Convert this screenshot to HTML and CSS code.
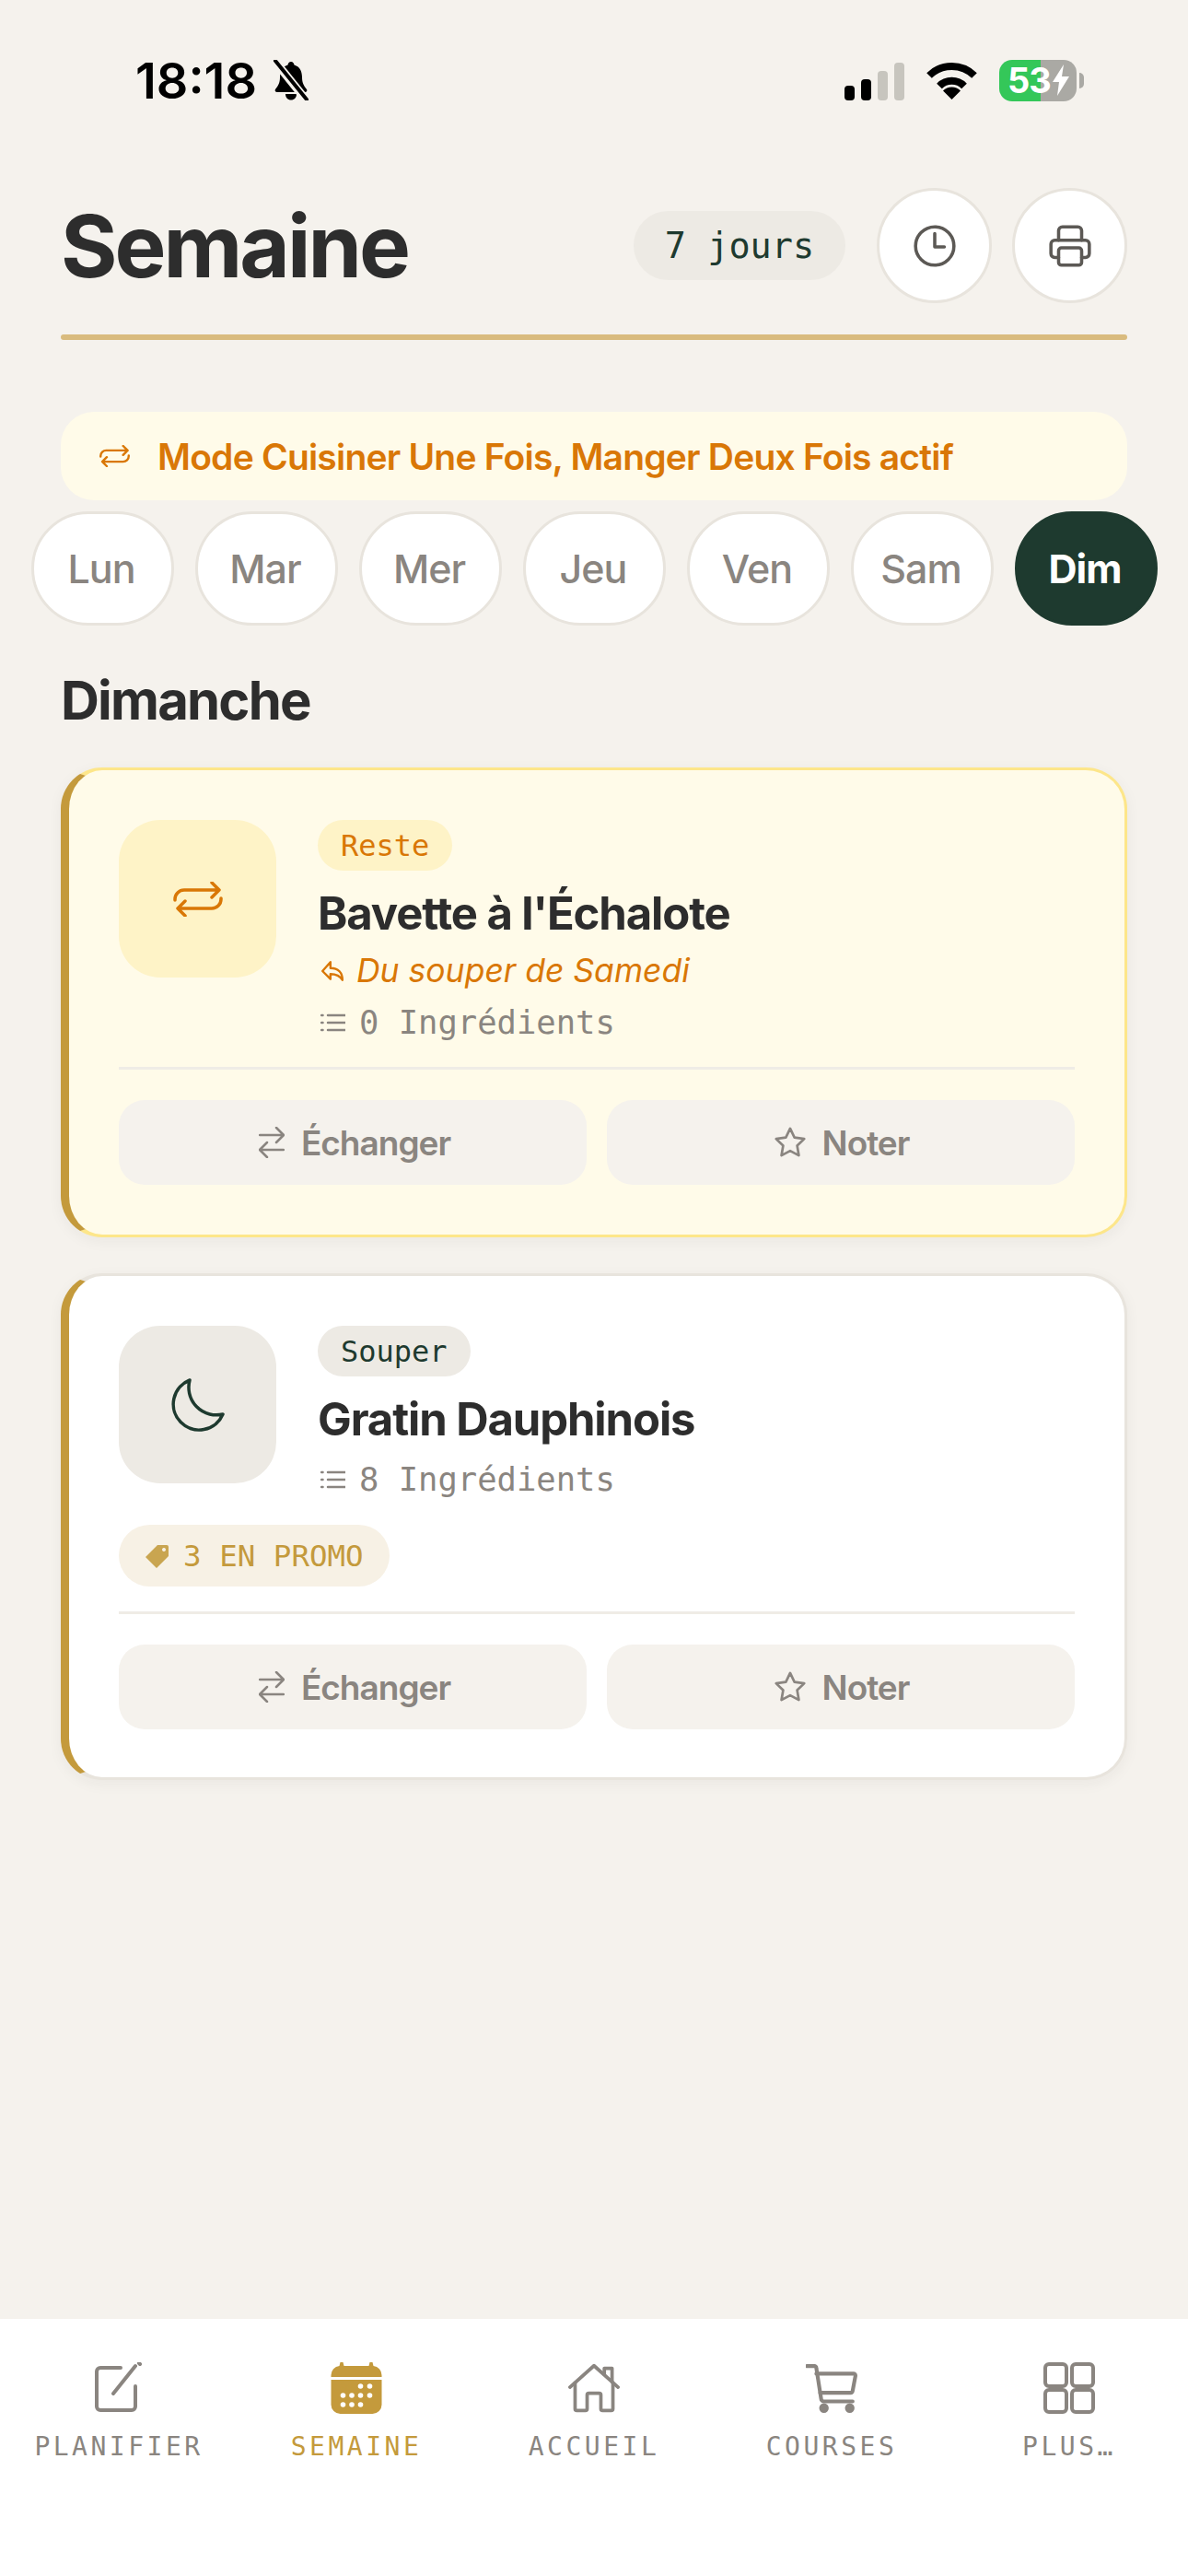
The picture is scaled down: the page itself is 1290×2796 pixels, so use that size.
FILE: index.html
```html
<!DOCTYPE html>
<html lang="fr">
<head>
  <meta charset="UTF-8" />
  <meta name="viewport" content="width=device-width, initial-scale=1.0"/>
  <title>Semaine</title>
  <link rel="stylesheet" href="styles.css">
</head>
<body>
  <div class="page">
    <div class="status">
      <div class="status-left">
        <span class="time">18:18</span>
        <svg class="bell" viewBox="0 0 42 44"><path d="M21 2c2 0 3 1.500 3.500 3.500C31 7.500 33 13 33 19c0 6 2 9 5 13 1 1.500 0 3-2 3H6c-2 0-3-1.500-2-3 3-4 5-7 5-13 0-6 2-11.500 8.500-13.500C18 3.500 19 2 21 2Z"/><path d="M15 37h12c0 4-2.500 6.500-6 6.500S15 41 15 37Z"/><path d="M4 2l33 41" stroke="#f5f2ed" stroke-width="9"/><path d="M4 1l34 42" stroke="#000" stroke-width="4" stroke-linecap="round"/></svg>
      </div>
      <div class="status-right">
        <div class="signal">
          <i class="bar b1"></i><i class="bar b2"></i><i class="bar b3 off"></i><i class="bar b4 off"></i>
        </div>
        <svg class="wifi" viewBox="0 0 57 42" fill="none" stroke="#000" stroke-width="8"><path d="M4 16A35 35 0 0 1 53 16"/><path d="M15 27.500A19 19 0 0 1 42 27.500"/><path d="M28.500 42L19 32.500A13.500 13.500 0 0 1 38 32.500Z" fill="#000" stroke="none"/></svg>
        <div class="battery-wrap">
          <div class="battery">
            <span>53</span>
            <svg class="bolt" viewBox="0 0 20 34"><path d="M13 0L1 19h7L6 34 19 13h-8Z" fill="#fff"/></svg>
          </div>
          <div class="battery-tip"></div>
        </div>
      </div>
    </div>

    <header class="page-head">
      <h1>Semaine</h1>
      <div class="head-tools">
        <span class="days-pill">7 jours</span>
        <button class="round-btn">
          <svg viewBox="0 0 24 24"><circle cx="12" cy="12" r="10"/><path d="M12 5.500V12.500h5"/></svg>
        </button>
        <button class="round-btn">
          <svg viewBox="0 0 24 24"><path d="M6 18H4a2 2 0 0 1-2-2v-5a2 2 0 0 1 2-2h16a2 2 0 0 1 2 2v5a2 2 0 0 1-2 2h-2"/><path d="M6 9V4a2 2 0 0 1 2-2h8a2 2 0 0 1 2 2v5"/><rect x="6" y="13" width="12" height="9" rx="1.500"/></svg>
        </button>
      </div>
    </header>
    <div class="head-rule"></div>

    <div class="banner">
      <svg class="banner-icon" viewBox="0 0 54 38"><path d="M2 20v-1a10 10 0 0 1 10-10h38M42 1l8 8-8 8"/><path d="M52 18v1a10 10 0 0 1-10 10H5M13 21l-8 8 8 8"/></svg>
      <span>Mode Cuisiner Une Fois, Manger Deux Fois actif</span>
    </div>

    <div class="day-tabs">
      <div class="day">Lun</div>
      <div class="day">Mar</div>
      <div class="day">Mer</div>
      <div class="day">Jeu</div>
      <div class="day">Ven</div>
      <div class="day">Sam</div>
      <div class="day active">Dim</div>
    </div>

    <h2 class="day-title">Dimanche</h2>

    <section class="card leftover">
      <div class="card-top">
        <div class="meal-icon">
          <svg viewBox="0 0 54 38"><path d="M2 20v-1a10 10 0 0 1 10-10h38M42 1l8 8-8 8"/><path d="M52 18v1a10 10 0 0 1-10 10H5M13 21l-8 8 8 8"/></svg>
        </div>
        <div class="meal-info">
          <span class="tag">Reste</span>
          <div class="meal-name">Bavette à l'Échalote</div>
          <div class="meal-from">
            <svg viewBox="0 0 24 24"><path d="M10 3L2 12l8 8v-5c5 0 9 1 12 6 0-7-4-12-12-12Z"/></svg>
            <span>Du souper de Samedi</span>
          </div>
          <div class="meal-count">
            <svg viewBox="0 0 27 20"><path d="M8 2h19M8 10h19M8 18h19"/><path d="M1 2h1.500M1 10h1.500M1 18h1.500"/></svg>
            <span>0 Ingrédients</span>
          </div>
        </div>
      </div>
      <div class="card-line"></div>
      <div class="card-actions">
        <button class="act">
          <svg class="swap" viewBox="0 0 28 34"><path d="M1 9h26M19 1l8 8-8 8M27 25H1M9 17l-8 8 8 8"/></svg>
          Échanger
        </button>
        <button class="act">
          <svg viewBox="0 0 24 24"><path d="M12 2.500l2.950 6.100 6.700.95-4.850 4.700 1.150 6.650L12 17.750 6.050 20.900l1.150-6.650-4.850-4.700 6.700-.95Z"/></svg>
          Noter
        </button>
      </div>
    </section>

    <section class="card">
      <div class="card-top">
        <div class="meal-icon">
          <svg viewBox="0 0 58 58"><path d="M20 2A28 28 0 1 0 56 39A30 30 0 0 1 20 2Z"/></svg>
        </div>
        <div class="meal-info">
          <span class="tag">Souper</span>
          <div class="meal-name">Gratin Dauphinois</div>
          <div class="meal-count">
            <svg viewBox="0 0 27 20"><path d="M8 2h19M8 10h19M8 18h19"/><path d="M1 2h1.500M1 10h1.500M1 18h1.500"/></svg>
            <span>8 Ingrédients</span>
          </div>
        </div>
      </div>
      <div class="promo">
        <svg viewBox="0 0 28 28"><path d="M14 2h10a2 2 0 0 1 2 2v10L13 27 1 15ZM21 5a2 2 0 1 0 .01 0Z" fill-rule="evenodd"/></svg>
        3 EN PROMO
      </div>
      <div class="card-line"></div>
      <div class="card-actions">
        <button class="act">
          <svg class="swap" viewBox="0 0 28 34"><path d="M1 9h26M19 1l8 8-8 8M27 25H1M9 17l-8 8 8 8"/></svg>
          Échanger
        </button>
        <button class="act">
          <svg viewBox="0 0 24 24"><path d="M12 2.500l2.950 6.100 6.700.95-4.850 4.700 1.150 6.650L12 17.750 6.050 20.900l1.150-6.650-4.850-4.700 6.700-.95Z"/></svg>
          Noter
        </button>
      </div>
    </section>

    <nav class="tabbar">
      <div class="tab">
        <svg viewBox="0 0 56 56"><path d="M30 6H8a4 4 0 0 0-4 4v38a4 4 0 0 0 4 4h34a4 4 0 0 0 4-4V26"/><path d="M22 34L46 4M50 1l1 1"/></svg>
        <span>PLANIFIER</span>
      </div>
      <div class="tab active">
        <svg viewBox="0 0 55 56"><path d="M10 0h3l1 4h27l1-4h3l1 4a10 10 0 0 1 9 10v2H0v-2A10 10 0 0 1 9 4ZM0 19h55v27a10 10 0 0 1-10 10H10A10 10 0 0 1 0 46Z" fill="#c49a3c" stroke="none"/><g fill="#fff" stroke="none"><circle cx="32" cy="26" r="2.800"/><circle cx="42" cy="26" r="2.800"/><circle cx="13" cy="36" r="2.800"/><circle cx="22.500" cy="36" r="2.800"/><circle cx="32" cy="36" r="2.800"/><circle cx="42" cy="36" r="2.800"/><circle cx="13" cy="46" r="2.800"/><circle cx="22.500" cy="46" r="2.800"/><circle cx="32" cy="46" r="2.800"/></g></svg>
        <span>SEMAINE</span>
      </div>
      <div class="tab">
        <svg viewBox="0 0 60 56"><path d="M2 27L30 2l28 25"/><path d="M8 22v30a2 2 0 0 0 2 2h10a2 2 0 0 0 2-2V36a2 2 0 0 1 2-2h12a2 2 0 0 1 2 2v16a2 2 0 0 0 2 2h10a2 2 0 0 0 2-2V22"/><path d="M42 12V5h9v16"/></svg>
        <span>ACCUEIL</span>
      </div>
      <div class="tab">
        <svg viewBox="0 0 54 50"><path d="M1 2h8a2 2 0 0 1 2 2l5 32a3 3 0 0 0 3 3h30"/><path d="M11 10h39a2 2 0 0 1 2 2l-3 16a2 2 0 0 1-2 2H15"/><circle cx="19" cy="46" r="3" fill="#8a8580"/><circle cx="46" cy="46" r="3" fill="#8a8580"/></svg>
        <span>COURSES</span>
      </div>
      <div class="tab">
        <svg viewBox="0 0 56 56"><rect x="2" y="2" width="23" height="24" rx="4"/><rect x="31" y="2" width="23" height="24" rx="4"/><rect x="2" y="30" width="23" height="24" rx="4"/><rect x="31" y="30" width="23" height="24" rx="4"/></svg>
        <span>PLUS…</span>
      </div>
    </nav>
  </div>
</body>
</html>
```

FILE: styles.css
```css
:root {
  --bg: #f5f2ed;
  --text: #2d2d2d;
  --green: #1e3a2f;
  --gold: #c49a3c;
  --orange: #d97706;
  --muted: #8a8580;
  --line: #e8e4dd;
  --soft: #edeae4;
  --mono: "DejaVu Sans Mono", "Liberation Mono", monospace;
}

* {
  box-sizing: border-box;
}

body {
  margin: 0;
  background: var(--bg);
  color: var(--text);
  font-family: Inter, "Liberation Sans", sans-serif;
}

.page {
  display: flex;
  flex-direction: column;
  height: 2796px;
  overflow: hidden;
}

/* status bar */
.status {
  display: flex;
  justify-content: space-between;
  align-items: center;
  height: 46px;
  margin-top: 64px;
  padding: 0 113px 0 147px;
}

.status-left, .status-right {
  display: flex;
  align-items: center;
}

.time {
  font-size: 54px;
  font-weight: 600;
  color: #000;
}

.bell {
  width: 42px;
  height: 44px;
  margin-left: 16px;
}

.signal {
  display: flex;
  align-items: flex-end;
  gap: 7px;
  height: 41px;
  margin-top: 2px;
}

.bar {
  width: 11px;
  background: #000;
  border-radius: 4px;
}
.bar.off { background: #c7c5be; }
.b1 { height: 16px; }
.b2 { height: 23px; }
.b3 { height: 32px; }
.b4 { height: 41px; }

.wifi {
  width: 57px;
  height: 42px;
  margin-left: 23px;
}

.battery-wrap {
  display: flex;
  align-items: center;
  margin-left: 23px;
}

.battery {
  display: flex;
  align-items: center;
  gap: 1px;
  width: 84px;
  height: 45px;
  padding-left: 9px;
  border-radius: 14px;
  background: linear-gradient(90deg, #34c759 54%, #aaa9a4 54%);
  color: #fff;
  font-size: 38px;
  font-weight: 700;
  letter-spacing: -1px;
}

.bolt {
  width: 20px;
  height: 34px;
}

.battery-tip {
  width: 5px;
  height: 17px;
  margin-left: 3px;
  background: #aaa9a4;
  border-radius: 0 5px 5px 0;
}

/* title */
.page-head {
  display: flex;
  justify-content: space-between;
  align-items: center;
  height: 125px;
  margin-top: 94px;
  padding: 0 66px;
}

h1 {
  margin: 0;
  font-size: 94px;
  font-weight: 700;
  letter-spacing: -3px;
}

.head-tools {
  display: flex;
  align-items: center;
}

.days-pill {
  height: 75px;
  width: 230px;
  margin-right: 34px;
  border-radius: 38px;
  background: var(--soft);
  color: var(--green);
  font-family: var(--mono);
  font-size: 38.500px;
  line-height: 75px;
  text-align: center;
}

.round-btn {
  display: flex;
  align-items: center;
  justify-content: center;
  width: 125px;
  height: 125px;
  margin-left: 22px;
  padding: 0;
  background: #fff;
  border: 3px solid var(--line);
  border-radius: 50%;
}
.days-pill + .round-btn { margin-left: 0; }

.round-btn svg {
  width: 50px;
  height: 50px;
  fill: none;
  stroke: #5c5955;
  stroke-width: 1.700;
  stroke-linecap: round;
  stroke-linejoin: round;
}

.head-rule {
  height: 6px;
  margin: 34px 66px 0;
  background: #d9bb7e;
  border-radius: 3px;
}

/* banner */
.banner {
  display: flex;
  align-items: center;
  height: 96px;
  margin: 78px 66px 0;
  padding-left: 42px;
  background: #fffbe9;
  border-radius: 36px;
  color: var(--orange);
  font-size: 39px;
  font-weight: 600;
  letter-spacing: -0.800px;
}

.banner-icon {
  width: 33px;
  height: 24px;
  margin-right: 30px;
  fill: none;
  stroke: var(--orange);
  stroke-width: 4;
  stroke-linecap: round;
  stroke-linejoin: round;
}

/* days */
.day-tabs {
  display: flex;
  gap: 23px;
  margin-top: 12px;
  padding-left: 34px;
}

.day {
  display: flex;
  align-items: center;
  justify-content: center;
  width: 155px;
  height: 124px;
  padding-right: 3px;
  background: #fff;
  border: 3px solid var(--line);
  border-radius: 62px;
  color: var(--muted);
  font-size: 43px;
  font-weight: 450;
  letter-spacing: -1px;
}

.day.active {
  background: var(--green);
  border-color: var(--green);
  color: #fff;
  font-weight: 700;
}

.day-title {
  height: 68px;
  margin: 47px 66px 39px;
  font-size: 58px;
  font-weight: 700;
  line-height: 68px;
  letter-spacing: -1.800px;
}

/* meal cards */
.card {
  margin: 0 66px 39px;
  padding: 54px 54px 52px;
  background: #fff;
  border: 3px solid var(--line);
  border-left: 9px solid var(--gold);
  border-radius: 45px;
  box-shadow: 0 4px 16px rgba(45, 45, 45, 0.05);
}

.card.leftover {
  padding-bottom: 54px;
  background: #fffbe9;
  border-color: #fde68a;
  border-left-color: var(--gold);
}

.card-top {
  display: flex;
  gap: 45px;
}

.meal-icon {
  display: flex;
  flex: none;
  align-items: center;
  justify-content: center;
  width: 171px;
  height: 171px;
  background: var(--soft);
  border-radius: 45px;
}

.meal-icon svg {
  width: 58px;
  height: 58px;
  fill: none;
  stroke: var(--green);
  stroke-width: 3.500;
  stroke-linecap: round;
  stroke-linejoin: round;
}

.leftover .meal-icon { background: #fef3c7; }
.leftover .meal-icon svg {
  width: 54px;
  height: 38px;
  stroke: var(--orange);
}

.meal-info {
  display: flex;
  flex-direction: column;
  align-items: flex-start;
}

.tag {
  height: 55px;
  padding: 0 25px;
  background: var(--soft);
  border-radius: 28px;
  color: var(--green);
  font-family: var(--mono);
  font-size: 32px;
  line-height: 57px;
}

.leftover .tag {
  background: #fef3c7;
  color: var(--orange);
}

.meal-name {
  margin-top: 18px;
  margin-bottom: 11px;
  font-size: 49px;
  font-weight: 700;
  line-height: 58px;
  letter-spacing: -1.100px;
}

.meal-name + .meal-count {
  margin-top: 3px;
}

.meal-from {
  display: flex;
  align-items: center;
  gap: 13px;
  height: 43px;
  margin-bottom: 13px;
  color: var(--orange);
  font-size: 35.500px;
  font-style: italic;
}

.meal-from svg {
  width: 26px;
  height: 26px;
  margin-left: 3px;
  fill: none;
  stroke: var(--orange);
  stroke-width: 2.200;
  stroke-linejoin: round;
}

.meal-count {
  display: flex;
  align-items: center;
  gap: 15px;
  height: 43px;
  color: var(--muted);
  font-family: var(--mono);
  font-size: 35.500px;
}

.meal-count svg {
  width: 27px;
  height: 20px;
  margin-left: 3px;
  fill: none;
  stroke: var(--muted);
  stroke-width: 2.500;
  stroke-linecap: round;
}

.promo {
  display: flex;
  align-items: center;
  gap: 14px;
  width: 294px;
  height: 67px;
  margin-top: 28px;
  padding-left: 28px;
  background: #f7f1e5;
  border-radius: 34px;
  color: var(--gold);
  font-family: var(--mono);
  font-size: 32.500px;
}

.promo svg {
  width: 28px;
  height: 28px;
  fill: #c9a550;
}

.card-line {
  height: 3px;
  margin-top: 27px;
  background: #efece6;
}

.card-actions {
  display: flex;
  gap: 22px;
  margin-top: 33px;
}

.act {
  display: flex;
  flex: 1;
  align-items: center;
  justify-content: center;
  gap: 16px;
  height: 92px;
  padding: 0;
  background: var(--bg);
  border: none;
  border-radius: 28px;
  color: var(--muted);
  font-family: Inter, "Liberation Sans", sans-serif;
  font-size: 37px;
  font-weight: 600;
  letter-spacing: -1px;
}

.act svg {
  width: 38px;
  height: 38px;
  fill: none;
  stroke: var(--muted);
  stroke-width: 1.700;
  stroke-linecap: round;
  stroke-linejoin: round;
}

.act svg.swap {
  width: 28px;
  height: 34px;
  margin: 0 2px 0 4px;
  stroke-width: 2.500;
}

/* bottom tabs */
.tabbar {
  display: grid;
  grid-template-columns: repeat(5, 1fr);
  flex: none;
  height: 279px;
  margin-top: auto;
  padding-top: 47px;
  background: #fff;
}

.tab {
  display: flex;
  flex-direction: column;
  align-items: center;
  color: var(--muted);
  font-family: var(--mono);
  font-size: 28px;
  letter-spacing: 3.500px;
}

.tab svg {
  width: 56px;
  height: 56px;
  margin-bottom: 19px;
  fill: none;
  stroke: var(--muted);
  stroke-width: 4;
  stroke-linecap: round;
  stroke-linejoin: round;
}

.tab.active {
  color: var(--gold);
}
```
